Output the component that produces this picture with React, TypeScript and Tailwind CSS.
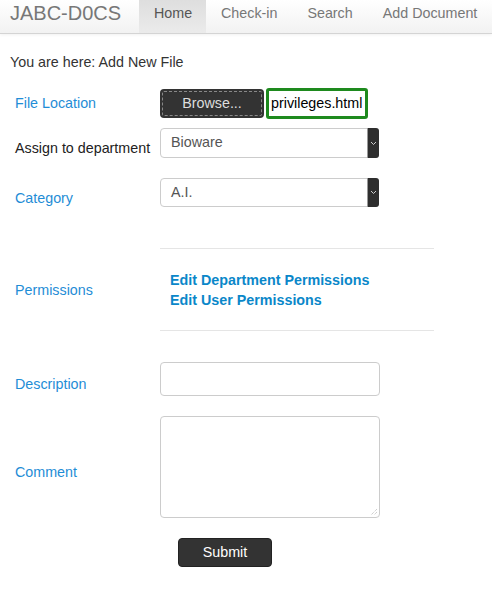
import React from "react";

const font = { fontFamily: '"Liberation Sans", Arial, sans-serif' };

function Select({ value, h }: { value: string; h: string }) {
  return (
    <div className={`relative w-[219px] ${h} rounded-[4px] border border-[#ccc] bg-white flex items-center pl-[10px] text-[#555]`}>
      {value}
      <div className="absolute right-[-1px] top-[-1px] bottom-[-1px] w-[12px] rounded-r-[3px] bg-[#2e2e2e] border-l border-[#999] flex items-center justify-center">
        <svg width="7" height="5" viewBox="0 0 7 5">
          <path d="M1 1 L3.5 3.5 L6 1" stroke="#ccc" strokeWidth="1" fill="none" />
        </svg>
      </div>
    </div>
  );
}

export default function App() {
  return (
    <div className="w-[492px] h-[591px] bg-white text-[14.3px] text-[#333]" style={font}>
      <div className="h-[34px] flex items-stretch border-b border-[#d4d4d4] bg-gradient-to-b from-white to-[#f2f2f2] shadow-[0_1px_3px_rgba(0,0,0,0.06)]">
        <div className="w-[139px] shrink-0 pl-[10px] pt-[1px] whitespace-nowrap text-[20px] leading-[24px] text-[#777]">JABC-D0CS</div>
        <div className="w-[67px] shrink-0 px-[15px] pt-[3px] leading-[20px] text-[#555] bg-gradient-to-b from-[#dedede] to-[#ebebeb]">Home</div>
        <div className="px-[15px] pt-[3px] leading-[20px] whitespace-nowrap text-[#777]">Check-in</div>
        <div className="px-[15px] pt-[3px] leading-[20px] whitespace-nowrap text-[#777]">Search</div>
        <div className="px-[15px] pt-[3px] leading-[20px] whitespace-nowrap text-[#777]">Add Document</div>
      </div>

      <div className="pl-[10px] mt-[18px] leading-[20px]">You are here: Add New File</div>

      <div className="flex items-start mt-[16px]">
        <div className="w-[160px] pl-[15px] pt-[7px] leading-[16px] text-[#1f8dd6]">File Location</div>
        <div className="flex items-center">
          <div className="w-[104px] h-[29px] rounded-[4px] bg-[#333] p-[2px]">
            <div className="h-full rounded-[2px] border border-dashed border-[#888] flex items-center justify-center text-[#ddd]">Browse...</div>
          </div>
          <div className="ml-[2px] h-[31px] w-[102px] rounded-[3px] border-[3px] border-[#1e8a1e] bg-white flex items-center pl-[2px] text-black whitespace-nowrap overflow-hidden">privileges.html</div>
        </div>
      </div>

      <div className="flex items-start mt-[9px]">
        <div className="w-[160px] pl-[15px] pt-[12px] leading-[16px] text-[#222] whitespace-nowrap">Assign to department</div>
        <Select value="Bioware" h="h-[30px]" />
      </div>

      <div className="flex items-start mt-[20px]">
        <div className="w-[160px] pl-[15px] pt-[12px] leading-[16px] text-[#1f8dd6]">Category</div>
        <Select value="A.I." h="h-[29px]" />
      </div>

      <div className="ml-[160px] w-[274px] mt-[41px] border-t border-[#e5e5e5]" />
      <div className="flex items-start pt-[21px] pb-[20px]">
        <div className="w-[160px] pl-[15px] pt-[12px] leading-[16px] text-[#1f8dd6]">Permissions</div>
        <div className="pl-[10px] font-bold text-[#0a87c9] leading-[20px]">
          <div>Edit Department Permissions</div>
          <div>Edit User Permissions</div>
        </div>
      </div>
      <div className="ml-[160px] w-[274px] border-t border-[#e5e5e5]" />

      <div className="flex items-start mt-[31px]">
        <div className="w-[160px] pl-[15px] pt-[14px] leading-[16px] text-[#1f8dd6]">Description</div>
        <div className="w-[220px] h-[34px] rounded-[4px] border border-[#ccc] bg-white" />
      </div>

      <div className="flex items-start mt-[20px]">
        <div className="w-[160px] pl-[15px] pt-[48px] leading-[16px] text-[#1f8dd6]">Comment</div>
        <div className="relative w-[220px] h-[102px] rounded-[4px] border border-[#ccc] bg-white">
          <svg className="absolute right-[1px] bottom-[1px]" width="8" height="8" viewBox="0 0 8 8">
            <path d="M7 1 L1 7 M7 4 L4 7" stroke="#bbb" strokeWidth="1" strokeDasharray="1 1" />
          </svg>
        </div>
      </div>

      <div className="ml-[178px] mt-[20px] w-[94px] h-[29px] rounded-[4px] bg-[#333] border border-[#222] flex items-center justify-center text-white">Submit</div>
    </div>
  );
}
